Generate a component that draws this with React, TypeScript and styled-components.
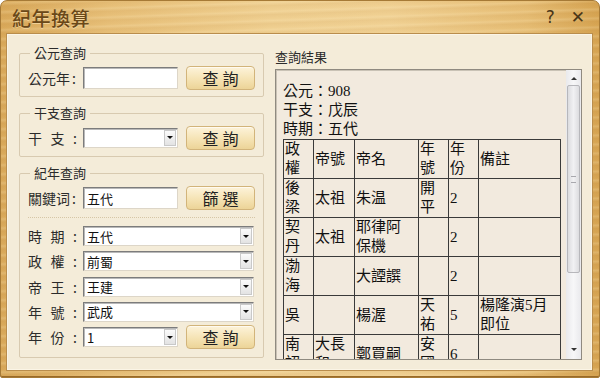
import React from "react"
import { styled, createGlobalStyle } from "styled-components"

const Global = createGlobalStyle`
  html, body {
    margin: 0;
    padding: 0;
    width: 600px;
    height: 378px;
    overflow: hidden;
    background: #ffffff;
  }
  * {
    box-sizing: border-box;
  }
`

const SANS = `"Noto Sans CJK TC", "Noto Sans", sans-serif`
const SERIF = `"Liberation Serif", "Noto Sans CJK TC", serif`

const Window = styled.div`
  width: 600px;
  height: 378px;
  display: flex;
  flex-direction: column;
  padding: 0 6px 6px 5px;
  border: 1px solid #a67a36;
  border-radius: 7px 7px 2px 2px;
  background:
    repeating-linear-gradient(
      178deg,
      rgba(255, 240, 200, 0) 0px,
      rgba(255, 240, 200, 0.18) 2px,
      rgba(160, 100, 30, 0.06) 5px,
      rgba(255, 240, 200, 0) 9px
    ),
    linear-gradient(
      90deg,
      #d9a95a 0%,
      #e7bf78 18%,
      #efcf90 45%,
      #f0d092 65%,
      #e6bd74 88%,
      #d6a452 100%
    );
  box-shadow: inset 0 -1px 0 #9a6a28;
  font-family: ${SANS};
  color: #2a2a2a;
`

const TitleBar = styled.div`
  height: 32px;
  display: flex;
  align-items: center;
  justify-content: space-between;
  padding: 0 4px 0 6px;
`

const Title = styled.div`
  font-size: 19px;
  font-weight: 500;
  letter-spacing: 0.5px;
  color: #6a4818;
  text-shadow: 0 1px 0 rgba(255, 235, 190, 0.6);
`

const TitleButtons = styled.div`
  display: flex;
  align-items: center;
  gap: 16px;
  padding-right: 4px;
`

const TitleButton = styled.span<{ $size: number }>`
  font-family: "DejaVu Sans", sans-serif;
  font-size: ${(p) => p.$size}px;
  color: #4a3618;
  line-height: 1;
`

const Body = styled.div`
  flex: 1;
  display: flex;
  gap: 11px;
  padding: 10px 10px 0 12px;
  background: #f4ecd9;
  border: 1px solid #b98d4c;
  box-shadow: inset 0 0 0 1px #fbf5e6;
`

const LeftColumn = styled.div`
  width: 245px;
  display: flex;
  flex-direction: column;
  gap: 7px;
`

const Group = styled.fieldset<{ $bottom?: number }>`
  margin: 0;
  padding: 4px 8px ${(p) => p.$bottom ?? 7}px 8px;
  border: 1px solid #d8cab0;
  border-radius: 2px;
  min-width: 0;
`

const Legend = styled.legend`
  padding: 0 4px;
  margin-left: 2px;
  font-size: 13px;
  line-height: 18px;
  color: #2b2b2b;
`

const Row = styled.div<{ $h: number }>`
  display: flex;
  align-items: center;
  height: ${(p) => p.$h}px;
`

const FieldLabel = styled.div`
  display: flex;
  align-items: center;
  width: 55px;
  flex-shrink: 0;
  font-size: 14px;
  color: #2b2b2b;
`

const SpreadLabel = styled.span`
  display: inline-block;
  width: 49px;
  text-align: justify;
  text-align-last: justify;
`

const Colon = styled.span`
  margin-left: 2px;
`

const fieldBorder = `
  background: #ffffff;
  border: 1px solid;
  border-color: #7c7c7c #ddd6c8 #ddd6c8 #7c7c7c;
  box-shadow: inset 1px 1px 0 #b9b9b9;
`

const TextInput = styled.div<{ $w: number }>`
  ${fieldBorder}
  width: ${(p) => p.$w}px;
  height: 22px;
  display: flex;
  align-items: center;
  padding-left: 3px;
  font-size: 13px;
  color: #111;
`

const SelectBox = styled.div<{ $w: number }>`
  ${fieldBorder}
  width: ${(p) => p.$w}px;
  height: 20px;
  display: flex;
  align-items: center;
  padding: 1px 1px 1px 3px;
  font-size: 13px;
  color: #111;
`

const SelectValue = styled.span`
  flex: 1;
  white-space: nowrap;
  overflow: hidden;
`

const SelectArrow = styled.span`
  width: 12px;
  height: 16px;
  display: flex;
  align-items: center;
  justify-content: center;
  border: 1px solid #c9c9c9;
  background: linear-gradient(#fbfbfb, #e3e3e3);
  &::after {
    content: "";
    border-left: 3px solid transparent;
    border-right: 3px solid transparent;
    border-top: 3px solid #111;
  }
`

const Button = styled.div`
  margin-left: 8px;
  width: 69px;
  height: 24px;
  flex-shrink: 0;
  display: flex;
  align-items: center;
  justify-content: center;
  border: 1px solid #d2b47a;
  border-radius: 4px;
  background: linear-gradient(#fdf3da, #f5e3b4 55%, #ecd498);
  box-shadow: inset 0 1px 0 #fffaf0;
  font-size: 16px;
  letter-spacing: 4px;
  padding-left: 4px;
  color: #222;
`

const Divider = styled.div`
  margin: 7px 0 8px;
  border-top: 1px dotted #d6c6a6;
`

const SelectList = styled.div`
  display: flex;
  flex-direction: column;
  gap: 5.3px;
`

const RightColumn = styled.div`
  flex: 1;
  display: flex;
  flex-direction: column;
  padding-top: 4px;
`

const ResultTitle = styled.div`
  font-size: 13px;
  line-height: 18px;
  margin-bottom: 3px;
  color: #2b2b2b;
`

const ResultBox = styled.div`
  height: 291px;
  display: flex;
  background: #f2eade;
  border: 1px solid #8f8a80;
  box-shadow: inset 1px 1px 0 #c9c2b5;
`

const ResultContent = styled.div`
  flex: 1;
  overflow: hidden;
  padding: 12px 0 0 7px;
  font-family: ${SERIF};
  font-size: 15px;
  line-height: 19px;
  color: #111;
`

const InfoLine = styled.div`
  white-space: nowrap;
`

const Table = styled.table`
  border-collapse: collapse;
  table-layout: fixed;
  width: 277px;
`

const Cell = styled.td`
  border: 1px solid #3a3a3a;
  padding: 0 1px;
  vertical-align: middle;
  text-align: left;
`

const ScrollBar = styled.div`
  width: 15px;
  display: flex;
  flex-direction: column;
  align-items: center;
  background: linear-gradient(90deg, #e9e9ec, #f7f7f8 50%, #e9e9ec);
  padding: 3px 0 4px;
`

const ScrollArrow = styled.span<{ $up?: boolean }>`
  height: 11px;
  display: flex;
  align-items: center;
  &::after {
    content: "";
    border-left: 3px solid transparent;
    border-right: 3px solid transparent;
    ${(p) =>
      p.$up ? "border-bottom: 3px solid #333;" : "border-top: 3px solid #333;"}
  }
`

const ScrollTrack = styled.div`
  flex: 1;
  width: 100%;
  padding: 1px 1px;
`

const ScrollThumb = styled.div`
  height: 188px;
  border: 1px solid #b7b7bb;
  border-radius: 2px;
  background: linear-gradient(90deg, #dcdcdf, #f1f1f3 50%, #dcdcdf);
  display: flex;
  align-items: center;
  justify-content: center;
  &::after {
    content: "";
    width: 5px;
    height: 5px;
    border-top: 1px solid #a8a8ad;
    border-bottom: 1px solid #a8a8ad;
  }
`

// two-character labels are spread out with the colon, as in "時 期 :"
const Field = ({ label, spread }: { label: string; spread?: boolean }) => (
  <FieldLabel>
    {spread ? (
      <SpreadLabel>{label}:</SpreadLabel>
    ) : (
      <>
        <span>{label}</span>
        <Colon>:</Colon>
      </>
    )}
  </FieldLabel>
)

const Select = ({ value, width }: { value: string; width: number }) => (
  <SelectBox $w={width}>
    <SelectValue>{value}</SelectValue>
    <SelectArrow />
  </SelectBox>
)

const eraSelects = [
  { label: "時期", value: "五代" },
  { label: "政權", value: "前蜀" },
  { label: "帝王", value: "王建" },
  { label: "年號", value: "武成" },
]

type ResultRow = { h: string; t: React.ReactNode; n: React.ReactNode; e: string; y: string; note: React.ReactNode }

const rows: ResultRow[] = [
  { h: "後梁", t: "太祖", n: "朱温", e: "開平", y: "2", note: "" },
  { h: "契丹", t: "太祖", n: <>耶律阿<br />保機</>, e: "", y: "2", note: "" },
  { h: "渤海", t: "", n: "大諲譔", e: "", y: "2", note: "" },
  { h: "吳", t: "", n: "楊渥", e: "天祐", y: "5", note: <>楊隆演5月<br />即位</> },
  { h: "南詔", t: "大長和", n: "鄭買嗣", e: "安國", y: "6", note: "" },
]

export default function App() {
  return (
    <>
      <Global />
      <Window>
        <TitleBar>
          <Title>紀年換算</Title>
          <TitleButtons>
            <TitleButton $size={17}>?</TitleButton>
            <TitleButton $size={17}>✕</TitleButton>
          </TitleButtons>
        </TitleBar>
        <Body>
          <LeftColumn>
            <Group>
              <Legend>公元查詢</Legend>
              <Row $h={23}>
                <Field label="公元年" />
                <TextInput $w={96} />
                <Button>查詢</Button>
              </Row>
            </Group>
            <Group>
              <Legend>干支查詢</Legend>
              <Row $h={23}>
                <Field label="干支" spread />
                <Select value="" width={96} />
                <Button>查詢</Button>
              </Row>
            </Group>
            <Group $bottom={10}>
              <Legend>紀年查詢</Legend>
              <Row $h={24}>
                <Field label="關鍵词" />
                <TextInput $w={96}>五代</TextInput>
                <Button>篩選</Button>
              </Row>
              <Divider />
              <SelectList>
                {eraSelects.map((s) => (
                  <Row $h={20} key={s.label}>
                    <Field label={s.label} spread />
                    <Select value={s.value} width={171} />
                  </Row>
                ))}
                <Row $h={20}>
                  <Field label="年份" spread />
                  <Select value="1" width={96} />
                  <Button>查詢</Button>
                </Row>
              </SelectList>
            </Group>
          </LeftColumn>
          <RightColumn>
            <ResultTitle>查詢結果</ResultTitle>
            <ResultBox>
              <ResultContent>
                <InfoLine>公元：908</InfoLine>
                <InfoLine>干支：戊辰</InfoLine>
                <InfoLine>時期：五代</InfoLine>
                <Table>
                  <colgroup>
                    <col style={{ width: 30 }} />
                    <col style={{ width: 41 }} />
                    <col style={{ width: 64 }} />
                    <col style={{ width: 30 }} />
                    <col style={{ width: 30 }} />
                    <col style={{ width: 82 }} />
                  </colgroup>
                  <tbody>
                    <tr>
                      <Cell>政權</Cell>
                      <Cell>帝號</Cell>
                      <Cell>帝名</Cell>
                      <Cell>年號</Cell>
                      <Cell>年份</Cell>
                      <Cell>備註</Cell>
                    </tr>
                    {rows.map((r, i) => (
                      <tr key={i}>
                        <Cell>{r.h}</Cell>
                        <Cell>{r.t}</Cell>
                        <Cell>{r.n}</Cell>
                        <Cell>{r.e}</Cell>
                        <Cell>{r.y}</Cell>
                        <Cell>{r.note}</Cell>
                      </tr>
                    ))}
                  </tbody>
                </Table>
              </ResultContent>
              <ScrollBar>
                <ScrollArrow $up />
                <ScrollTrack>
                  <ScrollThumb />
                </ScrollTrack>
                <ScrollArrow />
              </ScrollBar>
            </ResultBox>
          </RightColumn>
        </Body>
      </Window>
    </>
  )
}
